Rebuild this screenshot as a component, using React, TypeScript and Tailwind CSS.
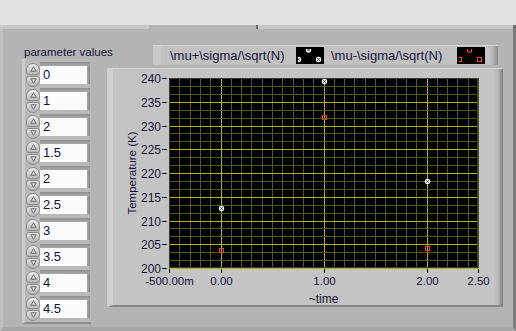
import React from 'react';

const values = ['0', '1', '2', '1.5', '2', '2.5', '3', '3.5', '4', '4.5'];

// plot box inside the chart svg
const PL = 56;
const PT = 9;
const PW = 309;
const PH = 190;

const px = (x: number) => PL + (x + 0.5) * (PW / 3);
const py = (v: number) => PT + PH - (v - 200) * (PH / 40);
const snap = (n: number) => Math.round(n) + 0.5;

const upper = [212.6, 239.4, 218.4];
const lower = [203.8, 231.7, 204.3];

const WhiteMark = ({ x, y }: { x: number; y: number }) => (
  <g>
    <circle cx={x} cy={y} r={2.7} fill="#ffffff" />
    <path
      d={`M${x - 1.3} ${y - 1.3}L${x + 1.3} ${y + 1.3}M${x + 1.3} ${y - 1.3}L${x - 1.3} ${y + 1.3}`}
      stroke="#111"
      strokeWidth={0.8}
    />
  </g>
);

const RedMark = ({ x, y }: { x: number; y: number }) => (
  <rect x={x - 2} y={y - 2} width={4} height={4} fill="none" stroke="#ff3c3c" strokeWidth={1} />
);

const Arrow = ({ down }: { down?: boolean }) => (
  <svg width="7" height="6" viewBox="0 0 7 6">
    <path
      d={down ? 'M3.5 5.3L6.3 0.7H0.7Z' : 'M3.5 0.7L6.3 5.3H0.7Z'}
      fill="#cfcfcf"
      stroke="#5a5a5a"
      strokeWidth="0.8"
      strokeLinejoin="round"
    />
  </svg>
);

const Spinner = () => (
  <div className="flex w-[14px] flex-col gap-[1px] py-[1px]">
    <div className="flex h-[12px] items-center justify-center rounded-t-[7px] rounded-b-[3px] border border-[#8c8c8c] bg-gradient-to-b from-[#ededed] to-[#bababa]">
      <Arrow />
    </div>
    <div className="flex h-[12px] items-center justify-center rounded-b-[7px] rounded-t-[3px] border border-[#8c8c8c] bg-gradient-to-b from-[#e4e4e4] to-[#b4b4b4]">
      <Arrow down />
    </div>
  </div>
);

const Swatch = ({ kind }: { kind: 'white' | 'red' }) => {
  const M = kind === 'white' ? WhiteMark : RedMark;
  const id = `clip-${kind}`;
  return (
    <svg width="28" height="17" className="block bg-black">
      <defs>
        <clipPath id={id}>
          <rect x="2" y="2" width="24" height="14" />
        </clipPath>
      </defs>
      <g clipPath={`url(#${id})`}>
        <M x={12.5} y={3} />
        <M x={2.5} y={12.5} />
        <M x={22.5} y={12.5} />
      </g>
    </svg>
  );
};

const Chart = () => {
  const vert: number[] = [];
  for (let k = 0; k <= 30; k++) vert.push(k);
  const hor: number[] = [];
  for (let j = 0; j <= 24; j++) hor.push(j);
  const yTicks = [200, 205, 210, 215, 220, 225, 230, 235, 240];
  const xTicks: [number, string][] = [
    [-0.5, '-500.00m'],
    [0, '0.00'],
    [1, '1.00'],
    [2, '2.00'],
    [2.5, '2.50'],
  ];
  const txt = '#15153a';

  return (
    <svg width="380" height="237" className="block" style={{ fontFamily: '"Liberation Sans", Arial, sans-serif' }}>
      <rect x={PL} y={PT} width={PW} height={PH} fill="#000" />
      {vert.map((k) => {
        const x = snap(PL + k * (PW / 30));
        const major = k === 5 || k === 15 || k === 25;
        return (
          <line key={`v${k}`} x1={x} x2={x} y1={PT} y2={PT + PH} stroke={major ? '#b4b400' : '#575700'} strokeWidth={1} />
        );
      })}
      {hor.map((j) => {
        const y = snap(PT + PH - j * (PH / 24));
        const major = j % 3 === 0;
        return (
          <line key={`h${j}`} x1={PL} x2={PL + PW} y1={y} y2={y} stroke={major ? '#b4b400' : '#575700'} strokeWidth={1} />
        );
      })}
      <rect x={PL + 0.5} y={PT + 0.5} width={PW - 1} height={PH - 1} fill="none" stroke="#3a3a3a" />

      {[0, 1, 2].map((i) => (
        <g key={i}>
          <WhiteMark x={snap(px(i))} y={snap(py(upper[i]))} />
          <RedMark x={snap(px(i))} y={snap(py(lower[i]))} />
        </g>
      ))}

      {yTicks.map((v) => {
        const y = snap(py(v));
        return (
          <g key={v}>
            <line x1={49} x2={54} y1={y} y2={y} stroke="#000" />
            <text x={48} y={y + 4.5} textAnchor="end" fontSize="12" fill={txt}>
              {v}
            </text>
          </g>
        );
      })}
      {xTicks.map(([v, label]) => {
        const x = snap(px(v));
        return (
          <g key={label}>
            <line x1={x} x2={x} y1={PT + PH + 1} y2={PT + PH + 5} stroke="#000" />
            <text x={x} y={216} textAnchor="middle" fontSize="11.5" fill={txt}>
              {label}
            </text>
          </g>
        );
      })}
      <text x={px(1)} y={234} textAnchor="middle" fontSize="12" fill={txt}>
        ~time
      </text>
      <text
        transform="rotate(-90)"
        x={-104}
        y={19}
        textAnchor="middle"
        dominantBaseline="central"
        fontSize="11.5"
        fill={txt}
      >
        Temperature (K)
      </text>
    </svg>
  );
};

const App: React.FC = () => {
  return (
    <div
      className="flex h-[331px] w-[516px] flex-col overflow-hidden bg-[#b4b4b4] text-[#15153a]"
      style={{ fontFamily: '"Liberation Sans", Arial, sans-serif' }}
    >
      <div className="h-[25px] bg-[#e1e1e1]" />

      {/* panel top bevel with the flat tab notch */}
      <div className="flex h-[4px]">
        <div className="w-[149px] border-l-[3px] border-[#cdcdcd] bg-[#c8c8c8]" />
        <div className="w-[107px] bg-[#b4b4b4]" />
        <div className="w-[2px] bg-[#6e6e6e]" />
        <div className="flex-1 bg-[#c8c8c8]" />
        <div className="w-[3px] bg-[#707070]" />
      </div>

      <div className="flex flex-1 border-l-[3px] border-r-[3px] border-b-[4px] border-l-[#c2c2c2] border-r-[#7c7c7c] border-b-[#a6a6a6]">
        {/* array of numeric controls */}
        <div className="ml-[19px] flex w-[69px] flex-col">
          <div className="mt-[16px] h-[14px] whitespace-nowrap pl-[2px] text-[11.5px] leading-[14px]">
            parameter values
          </div>
          <div className="flex h-[265px] flex-col border-l-[3px] border-b-[2px] border-l-[#cbcbcb] border-b-[#8e8e8e] bg-[#b9b9b9] pl-[1px] pt-[3px]">
            {values.map((v, i) => (
              <div key={i} className="flex h-[26px]">
                <Spinner />
                <div className="flex flex-1 flex-col">
                  <div className="mr-[1px] h-[4px] bg-gradient-to-b from-[#8e8e8e] to-[#a8a8a8]" />
                  <div className="flex h-[18px]">
                    <div className="w-[47px] bg-[#fcfcfc] pl-[3px] text-[13px] leading-[18px] text-[#10104a]">{v}</div>
                    <div className="w-[3px] bg-gradient-to-r from-[#a8a8a8] to-[#8a8a8a]" />
                  </div>
                </div>
              </div>
            ))}
          </div>
        </div>

        {/* graph */}
        <div className="ml-[16px] flex flex-col">
          <div className="ml-[46px] mt-[16px] flex h-[20px] w-[345px] items-center border-t border-t-[#d6d6d6] bg-[#c1c1c1]">
            <div className="flex h-full w-[143px] items-center border-l-[8px] border-l-[#c9c9c9] pl-[9px] text-[13px]">
              \mu+\sigma/\sqrt(N)
            </div>
            <Swatch kind="white" />
            <div className="flex h-full w-[133px] items-center pl-[7px] text-[13px]">\mu-\sigma/\sqrt(N)</div>
            <Swatch kind="red" />
            <div className="h-full flex-1 bg-gradient-to-r from-[#c8c8c8] via-[#bdbdbd] to-[#8c8c8c]" />
          </div>
          <div className="mt-[3px] flex h-[239px] w-[396px] border-t border-b-[2px] border-l-[6px] border-t-[#d4d4d4] border-b-[#878787] border-l-[#d0d0d0] bg-[#c4c4c4]">
            <Chart />
            <div className="flex-1 bg-gradient-to-r from-[#c8c8c8] via-[#b8b8b8] to-[#7e7e7e]" />
          </div>
        </div>
      </div>
    </div>
  );
};

export default App;
